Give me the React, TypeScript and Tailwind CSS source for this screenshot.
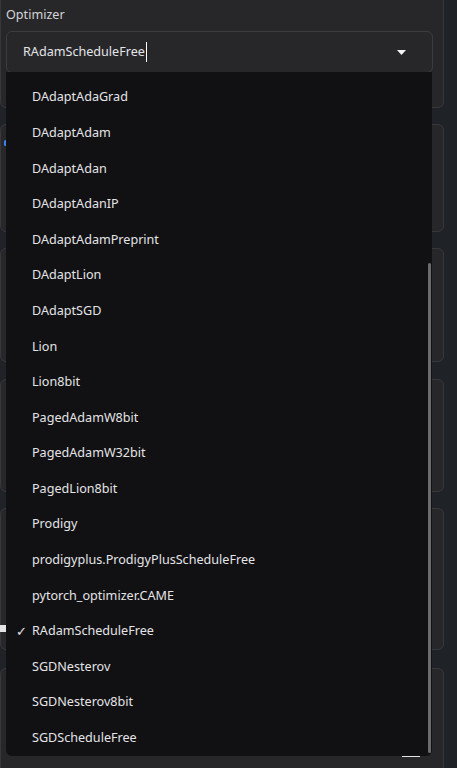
const options = [
  "DAdaptAdaGrad",
  "DAdaptAdam",
  "DAdaptAdan",
  "DAdaptAdanIP",
  "DAdaptAdamPreprint",
  "DAdaptLion",
  "DAdaptSGD",
  "Lion",
  "Lion8bit",
  "PagedAdamW8bit",
  "PagedAdamW32bit",
  "PagedLion8bit",
  "Prodigy",
  "prodigyplus.ProdigyPlusScheduleFree",
  "pytorch_optimizer.CAME",
  "RAdamScheduleFree",
  "SGDNesterov",
  "SGDNesterov8bit",
  "SGDScheduleFree",
];

const selected = "RAdamScheduleFree";

function Panel({ className }: { className: string }) {
  return <div className={`rounded-md border border-[#38383c] bg-[#27272a] ${className}`} />;
}

export default function App() {
  return (
    <div
      className="relative h-[768px] w-[457px] overflow-hidden bg-[#1f2227] text-[#e4e4e7]"
      style={{ fontFamily: '"Noto Sans", "Open Sans", sans-serif' }}
    >
      <div className="flex w-[444px] flex-col">
        <div className="-mt-2 h-[116px] rounded-md border border-[#38383c] bg-[#27272a] px-[5px] pt-[12px]">
          <div className="mb-[6px] text-[12.6px] leading-5 text-[#d4d4d8]">Optimizer</div>
          <div className="flex h-[42px] w-[427px] items-center justify-between rounded-md border border-[#3c3c40] bg-[#27272a] pl-4 pr-[26px]">
            <div className="flex items-center text-[12.6px]">
              <span>{selected}</span>
              <span className="ml-px inline-block h-[20px] w-px bg-white" />
            </div>
            <svg width="9" height="5" viewBox="0 0 9 5">
              <path d="M0 0h9L4.5 5z" fill="#f4f4f5" />
            </svg>
          </div>
        </div>
        <Panel className="mt-[16px] h-[108px]" />
        <Panel className="mt-[16px] h-[114px]" />
        <Panel className="mt-[17px] h-[113px]" />
        <Panel className="mt-[16px] h-[142px]" />
        <Panel className="mt-[18px] h-[120px]" />
      </div>

      <div className="absolute left-[4px] top-[140px] h-[6px] w-[3px] rounded-sm bg-[#3b82f6]" />
      <div className="absolute left-0 top-[625px] h-[7px] w-[6px] bg-[#e4e4e7]" />
      <div className="absolute left-[402px] top-[755px] h-[2px] w-[18px] bg-[#e4e4e7]" />

      <div className="absolute left-[6px] top-[72px] h-[684px] w-[426px] overflow-hidden rounded-b-md bg-[#111113] pt-[8px]">
        {options.map((o) => (
          <div key={o} className="relative flex h-[35.6px] items-center pl-[26px] text-[12.6px]">
            {o === selected && <span className="absolute left-[10px] text-[13px]">✓</span>}
            {o}
          </div>
        ))}
        <div className="absolute right-[1px] top-[191px] h-[490px] w-[3px] rounded-sm bg-[#6b6b6e]" />
      </div>
    </div>
  );
}
